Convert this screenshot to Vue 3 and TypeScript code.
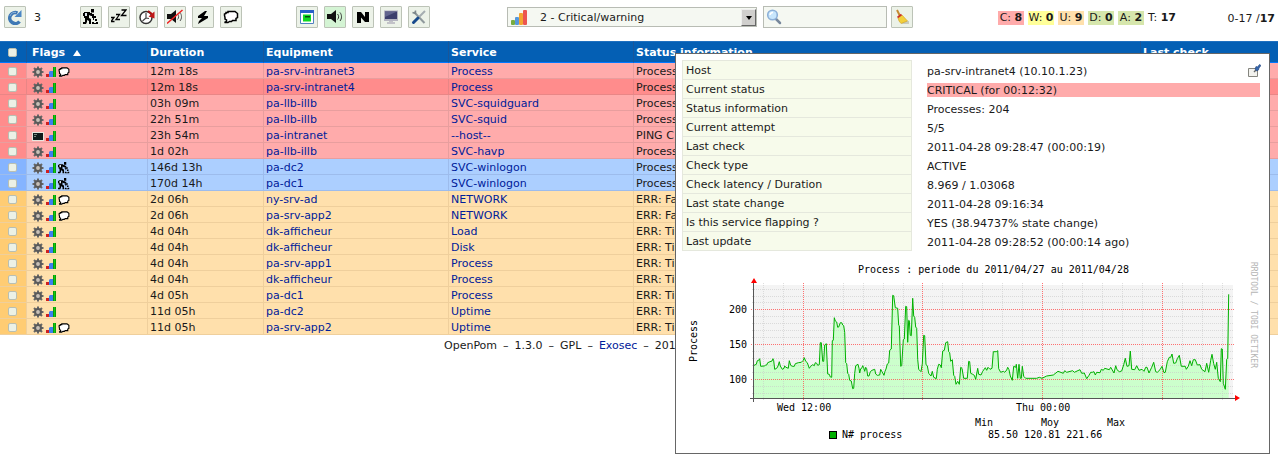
<script setup lang="ts">
import { ref } from 'vue'

interface Row {
  tone: 'crit' | 'hot' | 'ack' | 'warn'
  flags: string[]
  duration: string
  host: string
  service: string
  info: string
}

const row = (tone: Row['tone'], flags: string, duration: string, host: string, service: string, info: string): Row =>
  ({ tone, flags: flags.split(' '), duration, host, service, info })

const rows: Row[] = [
  row('crit', 'gear bars bubble', '12m 18s', 'pa-srv-intranet3', 'Process', 'Process'),
  row('hot', 'gear bars', '12m 18s', 'pa-srv-intranet4', 'Process', 'Process'),
  row('crit', 'gear bars', '03h 09m', 'pa-llb-illb', 'SVC-squidguard', 'Process'),
  row('crit', 'gear bars', '22h 51m', 'pa-llb-illb', 'SVC-squid', 'Process'),
  row('crit', 'screen bars', '23h 54m', 'pa-intranet', '--host--', 'PING C'),
  row('crit', 'gear bars', '1d 02h', 'pa-llb-illb', 'SVC-havp', 'Process'),
  row('ack', 'gear bars worker', '146d 13h', 'pa-dc2', 'SVC-winlogon', 'Process'),
  row('ack', 'gear bars worker', '170d 14h', 'pa-dc1', 'SVC-winlogon', 'Process'),
  row('warn', 'gear bars bubble', '2d 06h', 'ny-srv-ad', 'NETWORK', 'ERR: Fai'),
  row('warn', 'gear bars bubble', '2d 06h', 'pa-srv-app2', 'NETWORK', 'ERR: Fai'),
  row('warn', 'gear bars', '4d 04h', 'dk-afficheur', 'Load', 'ERR: Ti'),
  row('warn', 'gear bars', '4d 04h', 'dk-afficheur', 'Disk', 'ERR: Ti'),
  row('warn', 'gear bars', '4d 04h', 'pa-srv-app1', 'Process', 'ERR: Ti'),
  row('warn', 'gear bars', '4d 04h', 'dk-afficheur', 'Process', 'ERR: Ti'),
  row('warn', 'gear bars', '4d 05h', 'pa-dc1', 'Process', 'ERR: Ti'),
  row('warn', 'gear bars', '11d 05h', 'pa-dc2', 'Uptime', 'ERR: Ti'),
  row('warn', 'gear bars bubble', '11d 05h', 'pa-srv-app2', 'Uptime', 'ERR: Ti'),
]

const actions = [
  { icon: 'worker', label: 'Acknowledge' },
  { icon: 'sleep', label: 'Downtime' },
  { icon: 'clock', label: 'Recheck' },
  { icon: 'mute', label: 'Disable notifications' },
  { icon: 'bolt', label: 'Disable checks' },
  { icon: 'bubble', label: 'Comment' },
]

const views = [
  { icon: 'window', label: 'Popup', on: false },
  { icon: 'sound', label: 'Sound', on: true },
  { icon: 'nagios', label: 'Nagios', on: false },
  { icon: 'monitor', label: 'Monitor', on: false },
  { icon: 'tools', label: 'Options', on: false },
]

const counts = [
  { key: 'C', value: 8, tone: 'c-crit' },
  { key: 'W', value: 0, tone: 'c-warn' },
  { key: 'U', value: 9, tone: 'c-unk' },
  { key: 'D', value: 0, tone: 'c-ok' },
  { key: 'A', value: 2, tone: 'c-ok' },
  { key: 'T', value: 17, tone: 'c-all' },
]

const details = [
  ['Host', 'pa-srv-intranet4 (10.10.1.23)'],
  ['Current status', 'CRITICAL (for 00:12:32)'],
  ['Status information', 'Processes: 204'],
  ['Current attempt', '5/5'],
  ['Last check', '2011-04-28 09:28:47 (00:00:19)'],
  ['Check type', 'ACTIVE'],
  ['Check latency / Duration', '8.969 / 1.03068'],
  ['Last state change', '2011-04-28 09:16:34'],
  ['Is this service flapping ?', 'YES (38.94737% state change)'],
  ['Last update', '2011-04-28 09:28:52 (00:00:14 ago)'],
]

const level = ref('2')
const search = ref('')

// Process count curve, in thirds of a graph unit.
const wednesday = '220,332 229,328 232,317 236,316 239,311 242,334 253,333 256,331 260,330 263,323 270,320 276,318 279,311 281,317 284,343 290,340 294,333 298,320 301,333 307,343 312,340 314,333 318,337 325,340 328,317 332,331 337,334 343,334 346,326 355,323 364,322 370,316 373,308 377,319 382,323 388,340 392,334 398,329 403,332 406,323 410,325 413,331 418,329 421,263 424,263 428,319 431,319 434,270 439,266 443,357 448,358 451,366 455,367 457,257 460,256 463,188 466,198 470,201 473,217 476,216 481,203 485,203 488,210 491,212 494,232 497,323 500,326 503,355 506,358 509,376 514,378 518,401 521,400 524,355 527,332 534,328 537,340 539,354 542,341 545,340 548,332 551,338 554,349 557,337 560,341 563,363 567,363 571,350 576,346 584,343 587,357 592,361 599,360 602,343 606,350 612,361 615,349 618,342 622,327 626,324 629,286 634,282 638,121 641,122 646,158 653,160 656,211 658,212 662,334 665,332 670,254 673,252 677,154 680,155 683,262 686,196 688,197 691,241 694,242 698,130 701,183 704,187 707,216 710,220 713,313 716,343 723,350 727,326 731,241 734,242 738,329 742,332 746,355 753,363 757,349 761,367 769,371 772,343 776,328 781,330 784,338 788,288 793,286 797,263 803,260 806,290 809,293 812,319 817,314 821,361 824,364 828,388 833,379 838,388 842,337 846,340 851,370 862,370 866,319 869,320 872,355'
const thursday = '8,358 13,361 17,373 23,340 26,358 33,360 38,349 46,338 50,346 54,337 60,343 66,340 70,290 79,290 83,287 86,341 92,352 100,349 104,352 110,345 113,337 117,344 121,363 127,376 131,334 137,337 139,328 143,370 147,328 151,370 154,370 157,334 161,364 167,370 200,370 208,367 216,370 230,363 250,360 264,349 280,355 284,347 290,352 308,347 313,352 330,344 335,355 343,354 350,371 357,361 362,352 367,352 372,350 376,360 380,352 390,353 394,343 400,346 404,340 418,344 422,337 432,354 437,332 441,344 448,350 455,348 461,329 466,310 471,334 477,332 481,288 485,343 494,344 500,332 507,346 516,343 522,349 527,337 531,337 537,354 545,337 551,322 557,350 562,352 570,344 576,334 582,353 586,352 592,320 598,307 602,307 606,297 611,325 617,324 622,311 628,301 634,334 646,334 649,343 655,334 660,317 665,332 670,314 676,314 682,330 690,329 695,343 705,350 710,325 716,352 722,316 726,298 731,326 736,343 740,322 745,370 751,380 754,281 757,282 760,385 766,403 770,313 773,310 776,118'

const parse = (text: string, shift: number) =>
  text.split(' ').map((pair) => {
    const [x, y] = pair.split(',').map(Number)
    return `${((x + shift) / 3).toFixed(1)} ${(y / 3).toFixed(1)}`
  })
const curve = 'M' + [...parse(wednesday, 0), ...parse(thursday, 870)].join('L')
const area = curve + 'V143H73.5Z'

const minorX = [83, 103, 143, 163, 183, 203, 223, 262, 282, 302, 322, 342, 382, 402, 422, 442, 462, 502, 522, 542]
const majorX = [123, 242, 362, 482]
const minorY = [34, 41, 47, 61, 68, 75, 82, 96, 103, 110, 117, 131, 138]
const majorY = [54, 89, 124]
const minorGrid = minorX.map((x) => `M${x + 0.5} 28V145`).join('') + minorY.map((y) => `M72 ${y + 0.5}H554`).join('')
const majorGrid = majorX.map((x) => `M${x + 0.5} 28V146`).join('') + majorY.map((y) => `M71 ${y + 0.5}H555`).join('')
</script>

<template>
  <svg class="sprite" aria-hidden="true">
    <symbol id="i-gear" viewBox="0 0 12 12">
      <path d="M6 .5V11.500M.5 6H11.500M2 2L10 10M10 2L2 10" stroke="#666" stroke-width="2" />
      <circle cx="6" cy="6" r="3" fill="none" stroke="#5a5a5a" stroke-width="2" />
      <circle cx="6" cy="6" r="1.900" fill="#c9c1b8" />
    </symbol>
    <symbol id="i-bars" viewBox="0 0 12 12">
      <path d="M1 8H4V11H1Z" fill="#d02020" />
      <path d="M4 6L5 5H8V11H4Z" fill="#3c7ef0" />
      <path d="M8 1H11V11H8Z" fill="#0a9a0a" />
      <path d="M9 1H10V11H9Z" fill="#10cc10" />
    </symbol>
    <symbol id="i-bubble" viewBox="0 0 16 16">
      <path d="M3 4.500V3.500H5V2.500H12L14.500 4.500V8.500L13 9.500V11.500H9.500L8.500 12.500H6.500L5 13.500H1.500L3.500 12.500V11L2 10V8.500L1.500 6.500V5Z" fill="#fff" stroke="#000" stroke-width="1.500" />
    </symbol>
    <symbol id="i-worker" viewBox="0 0 16 16">
      <path d="M8 0H11V3.500H8ZM1 3H7V4H9V5H11V7H8L6 6V9L8 10V15H6V12L4 11V13L3 15H0V13H2V9H1V7H0V4H1Z" fill="#000" />
      <path d="M2 4H4V7H2Z" fill="#dfe6ee" />
      <path d="M9 7H13V9H9ZM10 9H11V11H10ZM12 10H14V12H12ZM9 13H11V14H13V13H15V15H9Z" fill="#000" />
    </symbol>
    <symbol id="i-screen" viewBox="0 0 12 12">
      <path d="M0 2H12V11H0Z" fill="#e8e6de" />
      <path d="M1 3H11V10H1Z" fill="#111c1c" />
      <path d="M2 4H5V5H2ZM2 6H4V7H2Z" fill="#7a8a82" />
    </symbol>
    <symbol id="i-sleep" viewBox="0 0 16 16">
      <path d="M0 8.500H3L0 12.500H3.500M5 5.500H8.500L5 10.500H9M10.500 1H15L10.500 6.500H15.500" fill="none" stroke="#000" stroke-width="1.300" />
    </symbol>
    <symbol id="i-clock" viewBox="0 0 16 16">
      <circle cx="7" cy="8.500" r="6" fill="#fff" stroke="#333" stroke-width="1.500" />
      <path d="M7 4V9L3.500 12M7 9L10 9.500" fill="none" stroke="#444" stroke-width="1.200" />
      <path d="M9 2L13 5" fill="none" stroke="#b01010" stroke-width="2" />
      <path d="M9.500 7.500L15.500 2.500V9.500Z" fill="#c01818" />
    </symbol>
    <symbol id="i-sound" viewBox="0 0 16 16">
      <path d="M0 5H4L9 1V14L4 10H0Z" fill="#111" />
      <path d="M10.500 5C12 6.500 12 9 10.500 10.500M13 3.500C15 6 15 9.500 13 12" fill="none" stroke="#333" stroke-width="1" />
    </symbol>
    <symbol id="i-mute" viewBox="0 0 16 16">
      <path d="M0 5H4L9 1V14L4 10H0Z" fill="#111" />
      <path d="M10.500 5C12 6.500 12 9 10.500 10.500M13 3.500C15 6 15 9.500 13 12" fill="none" stroke="#555" stroke-width="1" />
      <path d="M0 14.500L15.500 1" stroke="#f02020" stroke-width="1.500" />
    </symbol>
    <symbol id="i-bolt" viewBox="0 0 16 16">
      <path d="M10 2L3 7V9H7L4 12L3 15L13 9V7H9L12 2Z" fill="#000" />
    </symbol>
    <symbol id="i-window" viewBox="0 0 16 16">
      <path d="M1.500 1.500H14.500V14.500H1.500Z" fill="#fff" stroke="#5080c0" />
      <path d="M1 1H15V4H1Z" fill="#2860c8" />
      <path d="M4 5.500H12V12.500H4Z" fill="#10d820" />
      <path d="M6 7H11V8.500H6Z" fill="#064a10" />
    </symbol>
    <symbol id="i-nagios" viewBox="0 0 16 16">
      <path d="M2 3H6L10 8V3H14V13H10L6 8.500V14H2Z" fill="#000" />
    </symbol>
    <symbol id="i-monitor" viewBox="0 0 16 16">
      <path d="M1 1.500H15V12H1Z" fill="#b4b4c0" />
      <path d="M2 2.500H14V10H2Z" fill="#3c3f6c" />
      <path d="M2 2.500H14L2 8Z" fill="#62658e" />
      <path d="M6 12H10V13H12V15H4V13H6Z" fill="#c2c2c8" />
    </symbol>
    <symbol id="i-tools" viewBox="0 0 16 16">
      <path d="M3 3L13.500 14" stroke="#8f999c" stroke-width="2" />
      <path d="M1.500 3.500L4.500 4.500L4.500 1.500" fill="none" stroke="#7c878a" stroke-width="1.500" />
      <path d="M14 2L7.500 8.500" stroke="#a5adb0" stroke-width="2" />
      <path d="M7 9L2.500 13.500" stroke="#174a8c" stroke-width="3" stroke-linecap="round" />
    </symbol>
    <symbol id="i-refresh" viewBox="0 0 16 16">
      <path d="M12.500 12.500A5.500 5.500 0 1 1 10.500 4" fill="none" stroke="#3f78b5" stroke-width="3.500" />
      <path d="M14.500 1V8H7.500Z" fill="#4b86c4" />
      <path d="M3 7A5 5 0 0 1 9 3.500" fill="none" stroke="#8fb6dc" stroke-width="1" />
    </symbol>
    <symbol id="i-level" viewBox="0 0 16 16">
      <rect x="0" y="11" width="4" height="5" rx="1" fill="#78ac40" />
      <rect x="4" y="8" width="4" height="8" rx="1" fill="#5598dc" />
      <rect x="8" y="4" width="4" height="12" rx="1" fill="#f3a530" />
      <rect x="12" y="1" width="4" height="15" rx="1" fill="#ec5550" />
    </symbol>
    <symbol id="i-lens" viewBox="0 0 16 16">
      <path d="M9.500 9.500L14 14" stroke="#77889c" stroke-width="2.500" stroke-linecap="round" />
      <circle cx="6.500" cy="6" r="4.800" fill="#c8e6fc" stroke="#8db0d8" stroke-width="1.600" />
      <path d="M4 6A3 3 0 0 1 7 3.500" fill="none" stroke="#fff" stroke-width="1.500" />
    </symbol>
    <symbol id="i-broom" viewBox="0 0 16 16">
      <path d="M8 12H15V15H8Z" fill="#b9bcae" opacity=".7" />
      <path d="M3 1L6 7" stroke="#c48a30" stroke-width="2" />
      <path d="M4 9L8 6L13.500 12L7 14.500L5 12Z" fill="#f2d03c" stroke="#d0a020" stroke-width=".6" />
      <path d="M3.500 8.500L7.500 5.500" stroke="#cc3325" stroke-width="1.600" />
    </symbol>
    <symbol id="i-pin" viewBox="0 0 13 13">
      <path d="M.5 4.500H9.500V12.500H.5Z" fill="#f2f2ee" stroke="#85857e" />
      <path d="M6 8L8 6" stroke="#666" stroke-width="1.500" />
      <path d="M7 5L8 2.500L9.500 3L11.500 .5L13 1.500L11 4L10.500 6L8.500 7Z" fill="#3868ae" stroke="#1c3f78" stroke-width=".6" />
    </symbol>
  </svg>

  <main class="page">
    <form class="toolbar" @submit.prevent>
      <button class="tool" type="button" aria-label="Refresh"><svg><use href="#i-refresh" /></svg></button>
      <output class="timer">3</output>
      <div class="group">
        <button v-for="a in actions" :key="a.icon" class="tool" type="button" :aria-label="a.label">
          <svg><use :href="'#i-' + a.icon" /></svg>
        </button>
      </div>
      <div class="group views">
        <button v-for="v in views" :key="v.icon" class="tool" :class="{ on: v.on }" type="button" :aria-label="v.label">
          <svg><use :href="'#i-' + v.icon" /></svg>
        </button>
      </div>
      <div class="level">
        <svg class="level-icon"><use href="#i-level" /></svg>
        <select v-model="level" aria-label="Alert level">
          <option value="2">2 - Critical/warning</option>
        </select>
        <span class="arrow"></span>
      </div>
      <div class="search">
        <svg><use href="#i-lens" /></svg>
        <input v-model="search" type="text" aria-label="Search" />
      </div>
      <button class="tool clear" type="button" aria-label="Clear filter"><svg><use href="#i-broom" /></svg></button>
      <div class="counts">
        <span v-for="c in counts" :key="c.key" :class="c.tone">{{ c.key }}: <b>{{ c.value }}</b></span>
      </div>
      <div class="range">0-17 /<b>17</b></div>
    </form>

    <table class="alerts">
      <colgroup>
        <col class="w-check" /><col class="w-flags" /><col class="w-duration" /><col class="w-host" />
        <col class="w-host" /><col /><col class="w-last" />
      </colgroup>
      <thead>
        <tr>
          <th class="pick"><input type="checkbox" aria-label="Select all" /></th>
          <th class="flag-head">Flags <span class="sort"></span></th>
          <th>Duration</th>
          <th>Equipment</th>
          <th>Service</th>
          <th>Status information</th>
          <th>Last check</th>
        </tr>
      </thead>
      <tbody>
        <tr v-for="(r, i) in rows" :key="i" :class="r.tone">
          <td class="pick"><input type="checkbox" :aria-label="'Select ' + r.host + ' ' + r.service" /></td>
          <td class="flags">
            <div>
              <svg v-for="f in r.flags" :key="f"><use :href="'#i-' + f" /></svg>
            </div>
          </td>
          <td>{{ r.duration }}</td>
          <td><a href="#">{{ r.host }}</a></td>
          <td><a href="#">{{ r.service }}</a></td>
          <td>{{ r.info }}</td>
          <td></td>
        </tr>
      </tbody>
    </table>

    <footer>
      <span>OpenPom</span><span>–</span><span>1.3.0</span><span>–</span><span>GPL</span><span>–</span>
      <a href="#">Exosec</a><span>–</span><span>201</span>
    </footer>

    <aside class="popup">
      <table class="details">
        <tbody>
          <tr v-for="(d, i) in details" :key="d[0]">
            <th scope="row">{{ d[0] }}</th>
            <td>
              <div :class="{ alert: i === 1 }">{{ d[1] }}</div>
              <a v-if="i === 0" class="pin" href="#" aria-label="Open"><svg><use href="#i-pin" /></svg></a>
            </td>
          </tr>
        </tbody>
      </table>
      <svg class="graph" viewBox="2 0 578 198" role="img" aria-label="Process graph">
        <rect x="74" y="30" width="479" height="113" fill="#f4f4f4" />
        <path :d="area" fill="#ccffcc" />
        <path :d="minorGrid" fill="none" stroke="#c8c8c8" stroke-dasharray="1 1" opacity=".6" />
        <path :d="majorGrid" fill="none" stroke="#ff5050" stroke-dasharray="1 1" opacity=".8" />
        <path :d="curve" fill="none" stroke="#00b000" />
        <path d="M73.500 28V147M70 143.500H556" fill="none" stroke="#555" />
        <path d="M71 28L74 23L77 28ZM555 140L560 143L555 146Z" fill="#f00" />
        <text x="178" y="18">Process : periode du 2011/04/27 au 2011/04/28</text>
        <text x="49" y="58">200</text>
        <text x="49" y="93">150</text>
        <text x="49" y="128">100</text>
        <text x="97" y="156">Wed 12:00</text>
        <text x="336" y="156">Thu 00:00</text>
        <text x="295" y="171">Min</text>
        <text x="361" y="171">Moy</text>
        <text x="427" y="171">Max</text>
        <rect x="149.500" y="176.500" width="7" height="7" fill="#00b000" stroke="#000" />
        <text x="162" y="183">N# process</text>
        <text x="308" y="183">85.50 120.81 221.66</text>
        <text transform="translate(17 107) rotate(-90)">Process</text>
        <text class="mark" transform="translate(571 7) rotate(90)">RRDTOOL / TOBI OETIKER</text>
      </svg>
    </aside>
  </main>
</template>

<style>
body {
  margin: 0;
  background: #fff;
}
</style>

<style scoped>
.sprite {
  position: absolute;
  width: 0;
  height: 0;
}
.page {
  position: relative;
  min-height: 100vh;
  font: 11px/15px "DejaVu Sans", sans-serif;
  color: #1a1a1a;
}
a {
  color: #00209a;
  text-decoration: none;
}
.toolbar {
  display: flex;
  align-items: center;
  height: 22px;
  padding: 6px 3px 13px 4px;
}
.tool {
  box-sizing: border-box;
  width: 22px;
  height: 22px;
  padding: 1px;
  border: 1px solid #bcc3b7;
  background: #ecf2e8;
  border-radius: 1px;
  display: flex;
  align-items: center;
  justify-content: center;
}
.tool.on {
  background: #d4f4d4;
}
.tool svg {
  flex: none;
  width: 16px;
  height: 16px;
}
.timer {
  width: 46px;
  padding-left: 8px;
}
.group {
  display: flex;
  gap: 6px;
}
.views {
  margin-left: 54px;
}
.level {
  position: relative;
  width: 250px;
  height: 20px;
  margin-left: 77px;
}
.level select {
  appearance: none;
  box-sizing: border-box;
  width: 100%;
  height: 20px;
  padding: 0 20px 0 32px;
  border: 1px solid #b8bcb4;
  border-radius: 0;
  background: #f5f8f2;
  color: inherit;
  font: inherit;
}
.level-icon {
  position: absolute;
  left: 4px;
  top: 2px;
  width: 16px;
  height: 16px;
}
.arrow {
  position: absolute;
  right: 1px;
  top: 2px;
  width: 13px;
  height: 15px;
  border: 1px solid #eee;
  border-right-color: #666;
  border-bottom-color: #666;
  background: #d0cfcd;
  pointer-events: none;
}
.arrow::after {
  content: "";
  position: absolute;
  left: 4px;
  top: 6px;
  border: 3px solid transparent;
  border-top: 4px solid #000;
  border-bottom: 0;
}
.search {
  display: flex;
  align-items: center;
  box-sizing: border-box;
  width: 124px;
  height: 22px;
  margin-left: 6px;
  padding: 0 2px;
  border: 1px solid #b8bcb4;
  background: #f5f8f2;
}
.search svg {
  flex: none;
  width: 16px;
  height: 16px;
}
.search input {
  flex: 1;
  min-width: 0;
  border: 0;
  padding: 0 4px;
  background: none;
  font: inherit;
}
.clear {
  margin-left: 4px;
}
.counts {
  display: flex;
  gap: 4px;
  margin: 2px 0 0 auto;
}
.counts span {
  min-width: 26px;
  line-height: 14px;
  text-align: center;
  white-space: nowrap;
}
.c-crit { background: #ffabab; }
.c-warn { background: #ffff99; }
.c-unk { background: #ffe0ac; }
.c-ok { background: #d6e6ac; }
.range {
  width: 99px;
  margin-top: 2px;
  text-align: right;
}
.alerts {
  width: 100%;
  table-layout: fixed;
  border-spacing: 0;
}
.w-check { width: 26px; }
.w-flags { width: 121px; }
.w-duration { width: 116px; }
.w-host { width: 185px; }
.w-last { width: 138px; }
.alerts th {
  box-sizing: border-box;
  height: 22px;
  padding: 1px 2px 0;
  border-top: 1px solid #1f70c0;
  border-bottom: 1px solid #0078ff;
  border-left: 1px solid #1a5699;
  background: #045fb4;
  color: #fff;
  text-align: left;
  line-height: 19px;
}
.alerts td {
  box-sizing: border-box;
  height: 16px;
  padding: 2px 2px 0;
  border-left: 1px solid;
  border-bottom: 1px solid;
  border-color: inherit;
  line-height: 13px;
  white-space: nowrap;
  overflow: hidden;
}
.alerts .pick {
  border-left: 0;
  padding: 1px 0 0 8px;
  line-height: 0;
}
.pick input {
  appearance: none;
  box-sizing: border-box;
  display: block;
  width: 9px;
  height: 9px;
  margin: 0;
  border: 1px solid #b9bfb2;
  border-radius: 2px;
  background: #ecf1e6;
}
.alerts .flag-head {
  padding-left: 5px;
}
.sort {
  display: inline-block;
  margin-left: 4px;
  border: 4px solid transparent;
  border-bottom: 6px solid #fff;
  border-top: 0;
}
.flags div {
  display: flex;
  gap: 1px;
  padding-left: 3px;
}
.flags svg {
  width: 12px;
  height: 12px;
}
.crit { background: #ffabab; border-color: #e89e9e; }
.hot { background: #ff8c8c; border-color: #e98686; }
.ack { background: #accfff; border-color: #9dbcec; }
.warn { background: #ffe0ac; border-color: #efcf9c; }
.crit .pick, .hot .pick { background: #ff8c8c; }
.ack .pick { background: #85b4ff; }
.warn .pick { background: #ffcc73; }
footer {
  display: flex;
  gap: 6px;
  padding: 3px 0 0 444px;
}
.popup {
  position: absolute;
  top: 53px;
  right: 8px;
  box-sizing: border-box;
  width: 595px;
  padding: 6px 9px 0 6px;
  border: 1px solid #666;
  background: #fff;
}
.details {
  width: 100%;
  border-spacing: 0;
}
.details th {
  box-sizing: border-box;
  width: 230px;
  height: 19px;
  padding: 0 3px;
  border: 1px solid #e5e8dd;
  border-top-width: 0;
  background: #f7fbeb;
  font-weight: normal;
  text-align: left;
}
.details tr:first-child th {
  height: 20px;
  border-top-width: 1px;
}
.details td {
  position: relative;
  padding: 3px 0 0 15px;
  line-height: 13px;
  vertical-align: top;
}
.details tr:first-child td {
  padding-top: 4px;
}
.details td div {
  padding-top: 1px;
}
.details .alert {
  background: #ffabab;
}
.pin {
  position: absolute;
  right: -1px;
  top: 4px;
  line-height: 0;
}
.pin svg {
  width: 13px;
  height: 13px;
}
.graph {
  display: block;
  width: 578px;
  height: 198px;
  margin-top: 4px;
}
.graph text {
  font: 10px "DejaVu Sans Mono", monospace;
  fill: #000;
  white-space: pre;
}
.graph .mark {
  font-size: 8px;
  fill: #b5b5b5;
}
</style>
